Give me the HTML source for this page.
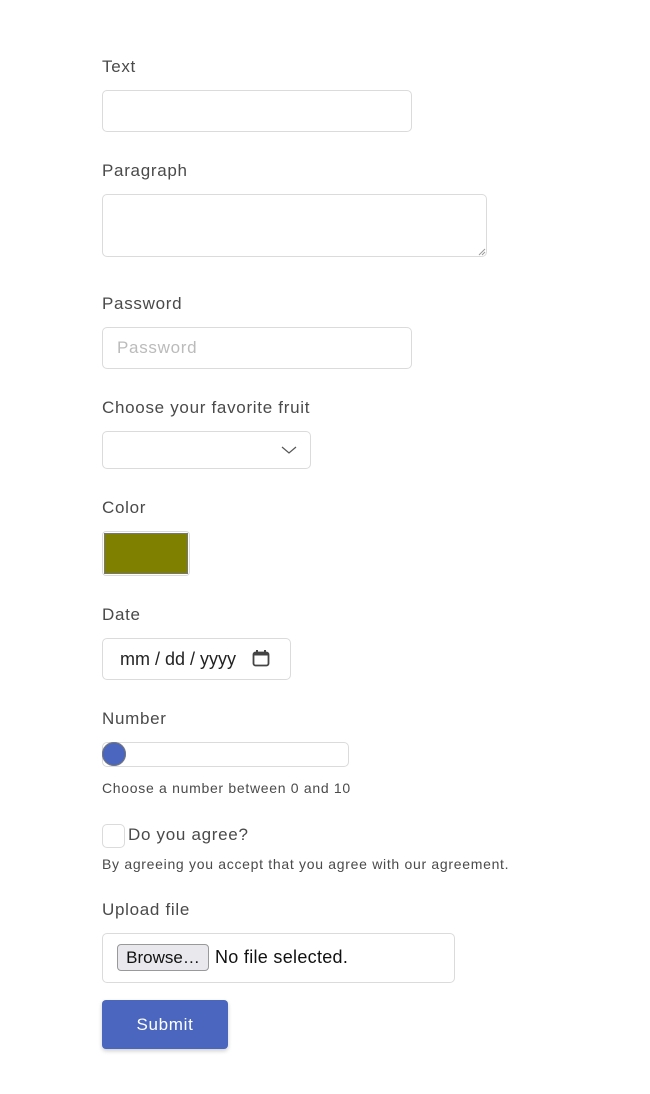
<!DOCTYPE html>
<html><head><style>
body{margin:0;width:650px;height:1094px;background:#fff;font-family:"Liberation Sans","DejaVu Sans",sans-serif;color:#4a4a4a;position:relative;overflow:hidden}
.a{position:absolute}
.l{position:absolute;left:102px;font-size:17px;line-height:20px;letter-spacing:0.7px}
.b{position:absolute;left:102px;border:1px solid #dbdbdb;border-radius:5px;box-sizing:border-box;background:#fff}
.h{position:absolute;left:102px;font-size:14px;line-height:16px;letter-spacing:0.7px}
</style></head><body>
<div class="l" style="top:57px">Text</div>
<div class="b" style="top:90px;width:310px;height:42px"></div>
<div class="l" style="top:161px">Paragraph</div>
<div class="b" style="top:194px;width:385px;height:63px"></div>
<svg class="a" style="left:478px;top:248px" width="8" height="8"><path d="M1 7L7 1M4 7L7 4" stroke="#999" stroke-width="1"/></svg>
<div class="l" style="top:294px">Password</div>
<div class="b" style="top:327px;width:310px;height:42px"></div>
<div class="a" style="left:117px;top:338px;font-size:17px;line-height:20px;color:#bbb;letter-spacing:0.7px">Password</div>
<div class="l" style="top:398px">Choose your favorite fruit</div>
<div class="b" style="top:431px;width:209px;height:38px"></div>
<svg class="a" style="left:281px;top:445px" width="16" height="10"><path d="M1 2L8 8L15 2" stroke="#555" stroke-width="1.2" fill="none"/></svg>
<div class="l" style="top:498px">Color</div>
<div class="b" style="top:531px;width:88px;height:45px;border-radius:4px"></div>
<div class="a" style="left:105px;top:534px;width:82px;height:39px;background:#808000;outline:1px solid #777"></div>
<div class="l" style="top:605px">Date</div>
<div class="b" style="top:638px;width:189px;height:42px"></div>
<div class="a" style="left:120px;top:649px;font-size:18px;line-height:20px;color:#222">mm / dd / yyyy</div>
<svg class="a" style="left:252px;top:649px" width="18" height="18"><rect x="1.5" y="3.5" width="15" height="13" rx="2" fill="none" stroke="#444" stroke-width="1.8"/><rect x="1.5" y="3.5" width="15" height="3" fill="#444"/><path d="M5 1v4M13 1v4" stroke="#444" stroke-width="2"/></svg>
<div class="l" style="top:709px">Number</div>
<div class="b" style="top:742px;width:247px;height:25px"></div>
<div class="a" style="left:102px;top:742px;width:24px;height:24px;border-radius:50%;background:#4a66be;box-shadow:0 0 0 1px #777 inset"></div>
<div class="h" style="top:780px">Choose a number between 0 and 10</div>
<div class="b" style="top:824px;width:23px;height:24px"></div>
<div class="a" style="left:128px;top:825px;font-size:17px;line-height:20px;letter-spacing:0.7px">Do you agree?</div>
<div class="h" style="top:856px">By agreeing you accept that you agree with our agreement.</div>
<div class="l" style="top:900px">Upload file</div>
<div class="b" style="top:933px;width:353px;height:50px"></div>
<div class="a" style="left:117px;top:944px;width:92px;height:27px;box-sizing:border-box;border:1px solid #999;border-radius:4px;background:#e9e9ed;color:#111;font-size:17px;line-height:25px;text-align:center">Browse…</div>
<div class="a" style="left:215px;top:947px;font-size:18px;line-height:21px;color:#111;letter-spacing:0.3px">No file selected.</div>
<div class="a" style="left:102px;top:1000px;width:126px;height:49px;background:#4a66be;border-radius:4px;box-shadow:0 2px 4px rgba(0,0,0,.2);color:#fff;font-size:17px;line-height:49px;text-align:center;letter-spacing:0.7px">Submit</div>
</body></html>
